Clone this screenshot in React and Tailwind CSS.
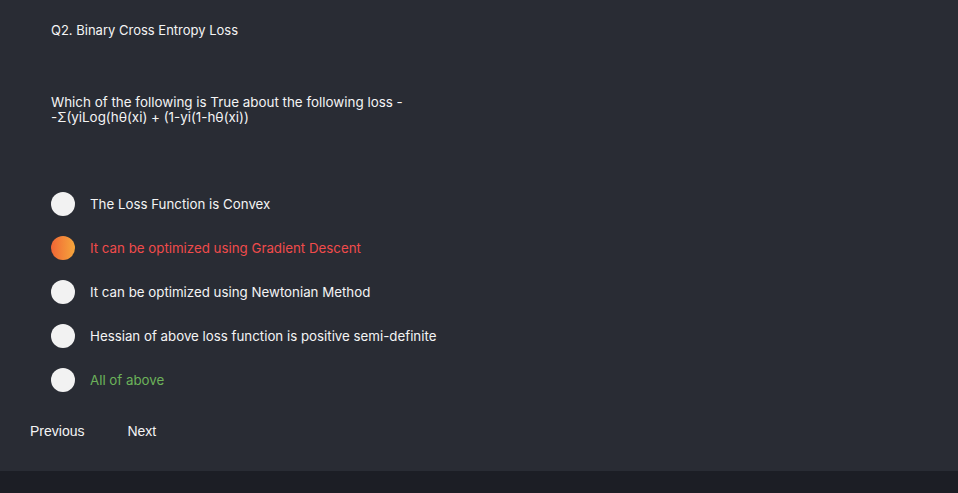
import React, { useState } from 'react';

const options = [
  { text: 'The Loss Function is Convex', color: 'text-[#f4f4f4]' },
  { text: 'It can be optimized using Gradient Descent', color: 'text-[#f04b4b]' },
  { text: 'It can be optimized using Newtonian Method', color: 'text-[#f4f4f4]' },
  { text: 'Hessian of above loss function is positive semi-definite', color: 'text-[#f4f4f4]' },
  { text: 'All of above', color: 'text-[#6cb25a]' },
];

const App = () => {
  const [selected, setSelected] = useState(1);

  return (
    <div className="w-[958px] h-[493px] bg-[#1c1e25] flex flex-col" style={{ fontFamily: 'Inter, "Noto Sans", sans-serif' }}>
      <div className="h-[471px] bg-[#292c34] flex flex-col">
        <div className="pl-[51px] pt-[21px]">
          <h2 className="text-[13px] leading-[18px] text-[#f4f4f4]">Q2. Binary Cross Entropy Loss</h2>

          <p className="mt-[56px] text-[13.4px] leading-[15px] text-[#f4f4f4]">
            Which of the following is True about the following loss -<br />
            -Σ(yiLog(hθ(xi) + (1-yi(1-hθ(xi))
          </p>

          <div className="mt-[67px] flex flex-col gap-[20px]">
            {options.map((opt, i) => (
              <button
                key={i}
                onClick={() => setSelected(i)}
                className="flex items-center gap-[15px] text-left"
              >
                <span
                  className={`w-[24px] h-[24px] rounded-full shrink-0 ${
                    selected === i ? 'bg-gradient-to-r from-[#ef6535] to-[#f5a63c]' : 'bg-[#f2f2f2]'
                  }`}
                />
                <span className={`text-[13.3px] leading-[24px] ${opt.color}`}>{opt.text}</span>
              </button>
            ))}
          </div>
        </div>

        <div className="flex pl-[30px] mt-[29px] gap-[43px] text-[14px] text-[#f4f4f4]" style={{ fontFamily: '"Liberation Sans", Arial, sans-serif' }}>
          <button>Previous</button>
          <button>Next</button>
        </div>
      </div>
    </div>
  );
};

export default App;
